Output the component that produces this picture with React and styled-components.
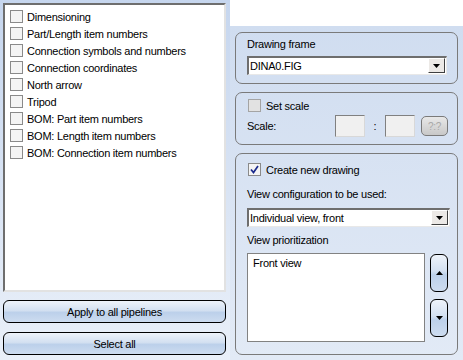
import React from "react";
import styled, { createGlobalStyle } from "styled-components";

const GlobalStyle = createGlobalStyle`
  html, body {
    margin: 0;
    padding: 0;
    background: #ffffff;
  }
  body {
    font-family: "Liberation Sans", Arial, sans-serif;
    font-size: 11px;
    letter-spacing: -0.25px;
    color: #000;
  }
`;

const layers = [
  "Dimensioning",
  "Part/Length item numbers",
  "Connection symbols and numbers",
  "Connection coordinates",
  "North arrow",
  "Tripod",
  "BOM: Part item numbers",
  "BOM: Length item numbers",
  "BOM: Connection item numbers",
];

const CheckMark = () => (
  <svg width="9" height="9" viewBox="0 0 9 9">
    <path d="M1 4.5 L3.5 7.5 L8 1" fill="none" stroke="#1a2a8c" strokeWidth="1.7" />
  </svg>
);

const Arrow = ({ up }) => (
  <svg width="7" height="4" viewBox="0 0 7 4">
    <path d={up ? "M0 4 L3.5 0 L7 4 Z" : "M0 0 L7 0 L3.5 4 Z"} fill="#000" />
  </svg>
);

const Check = ({ checked, disabled }) => (
  <Box $disabled={disabled}>{checked && <CheckMark />}</Box>
);

const Combo = ({ value, width }) => (
  <ComboBox style={{ width }}>
    <ComboText>{value}</ComboText>
    <ComboButton>
      <Arrow />
    </ComboButton>
  </ComboBox>
);

const App = () => {
  return (
    <Screen>
      <GlobalStyle />
      <LeftPane>
        <LayerList>
          {layers.map((name) => (
            <LayerRow key={name}>
              <Check />
              <span>{name}</span>
            </LayerRow>
          ))}
        </LayerList>
        <WideButton>Apply to all pipelines</WideButton>
        <WideButton>Select all</WideButton>
      </LeftPane>

      <RightPane>
        <TopStrip />
        <Panel>
          <Group $height={52} $pad={3}>
            <Label>Drawing frame</Label>
            <Spacer $h={3} />
            <Combo value="DINA0.FIG" width={200} />
          </Group>

          <Group $height={53} $pad={4}>
            <CheckRow>
              <Check disabled />
              <span>Set scale</span>
            </CheckRow>
            <Spacer $h={1} />
            <ScaleRow>
              <span>Scale:</span>
              <ScaleInputs>
                <ScaleBox />
                <Colon>:</Colon>
                <ScaleBox />
                <RatioButton>?:?</RatioButton>
              </ScaleInputs>
            </ScaleRow>
          </Group>

          <Group $height={202} $pad={7}>
            <CheckRow>
              <Check checked />
              <span>Create new drawing</span>
            </CheckRow>
            <Spacer $h={8} />
            <Label>View configuration to be used:</Label>
            <Spacer $h={5} />
            <Combo value="Individual view, front" width={203} />
            <Spacer $h={5} />
            <Label>View prioritization</Label>
            <Spacer $h={4} />
            <PriorityRow>
              <PriorityList>Front view</PriorityList>
              <MoveButtons>
                <MoveButton>
                  <Arrow up />
                </MoveButton>
                <MoveButton>
                  <Arrow />
                </MoveButton>
              </MoveButtons>
            </PriorityRow>
          </Group>
        </Panel>
      </RightPane>
    </Screen>
  );
};

export default App;

/* Styled Components */
const Screen = styled.div`
  width: 463px;
  height: 360px;
  display: flex;
  overflow: hidden;
`;

const LeftPane = styled.div`
  width: 230px;
  flex-shrink: 0;
  box-sizing: border-box;
  padding: 3px 4px 5px 3px;
  display: flex;
  flex-direction: column;
  gap: 9px;
  background: linear-gradient(#c6d6ee, #eaf0f9);
`;

const LayerList = styled.div`
  flex: 1;
  background: #fff;
  border-top: 2px solid #6e6e6e;
  border-left: 2px solid #6e6e6e;
  border-right: 2px solid #e2e2e2;
  border-bottom: 2px solid #e2e2e2;
  padding: 3px 0 0 5px;
  margin-bottom: -1px;
`;

const LayerRow = styled.div`
  display: flex;
  align-items: center;
  gap: 4px;
  height: 17px;
`;

const Box = styled.div`
  width: 11px;
  height: 11px;
  border: 1px solid ${(p) => (p.$disabled ? "#a4a4a4" : "#8a8a8a")};
  background: ${(p) => (p.$disabled ? "#e2e2e2" : "#f4f4f4")};
  display: flex;
  align-items: center;
  justify-content: center;
  flex-shrink: 0;
`;

const WideButton = styled.div`
  height: 21px;
  border: 1px solid #000;
  border-radius: 6px;
  display: flex;
  align-items: center;
  justify-content: center;
  background: linear-gradient(#eef3fa 0%, #d3e0f1 45%, #bcd0ea 55%, #cddcf0 100%);
`;

const RightPane = styled.div`
  flex: 1;
  min-width: 0;
  display: flex;
  flex-direction: column;
`;

const TopStrip = styled.div`
  height: 27px;
  background: #fff;
`;

const Panel = styled.div`
  flex: 1;
  background: linear-gradient(#d0ddf0, #e2eaf6);
  padding: 6px 5px 5px 5px;
  display: flex;
  flex-direction: column;
  gap: 8px;
`;

const Group = styled.div`
  height: ${(p) => p.$height}px;
  flex-shrink: 0;
  box-sizing: border-box;
  border: 1px solid #7a7a7a;
  border-radius: 7px;
  padding: ${(p) => p.$pad}px 9px 0 11px;
  display: flex;
  flex-direction: column;
`;

const Spacer = styled.div`
  height: ${(p) => p.$h}px;
  flex-shrink: 0;
`;

const Label = styled.div`
  height: 17px;
  line-height: 17px;
`;

const ComboBox = styled.div`
  height: 19px;
  flex-shrink: 0;
  box-sizing: border-box;
  background: #fff;
  border-top: 2px solid #6e6e6e;
  border-left: 2px solid #6e6e6e;
  border-right: 1px solid #e8e8e8;
  border-bottom: 1px solid #e8e8e8;
  display: flex;
  align-items: stretch;
`;

const ComboText = styled.div`
  flex: 1;
  padding-left: 1px;
  line-height: 16px;
`;

const ComboButton = styled.div`
  width: 15px;
  margin: 0 1px 1px 0;
  background: #ece9e6;
  border: 1px solid;
  border-color: #fff #404040 #404040 #fff;
  display: flex;
  align-items: center;
  justify-content: center;
`;

const CheckRow = styled.div`
  display: flex;
  align-items: center;
  gap: 5px;
  height: 17px;
  padding-left: 1px;
`;

const ScaleRow = styled.div`
  display: flex;
  align-items: center;
  justify-content: space-between;
`;

const ScaleInputs = styled.div`
  display: flex;
  align-items: center;
`;

const ScaleBox = styled.div`
  width: 28px;
  height: 20px;
  background: #f0f0f0;
  border: 1px solid;
  border-color: #808080 #d8d8d8 #d8d8d8 #808080;
`;

const Colon = styled.span`
  width: 20px;
  text-align: center;
`;

const RatioButton = styled.div`
  margin-left: 6px;
  width: 25px;
  height: 18px;
  border: 1px solid #7a7a7a;
  border-radius: 5px;
  background: linear-gradient(#e8e8e8, #c8c8c8);
  color: #a8a8a8;
  font-size: 10px;
  display: flex;
  align-items: center;
  justify-content: center;
`;

const PriorityRow = styled.div`
  display: flex;
  gap: 5px;
`;

const PriorityList = styled.div`
  width: 167px;
  height: 81px;
  background: #fff;
  border: 1px solid #828282;
  padding: 3px 5px;
`;

const MoveButtons = styled.div`
  display: flex;
  flex-direction: column;
  gap: 7px;
  padding-top: 1px;
`;

const MoveButton = styled.div`
  width: 16px;
  height: 36px;
  border: 1px solid #000;
  border-radius: 6px;
  display: flex;
  align-items: center;
  justify-content: center;
  background: linear-gradient(#eef3fa 0%, #d3e0f1 45%, #bcd0ea 55%, #cddcf0 100%);
`;
